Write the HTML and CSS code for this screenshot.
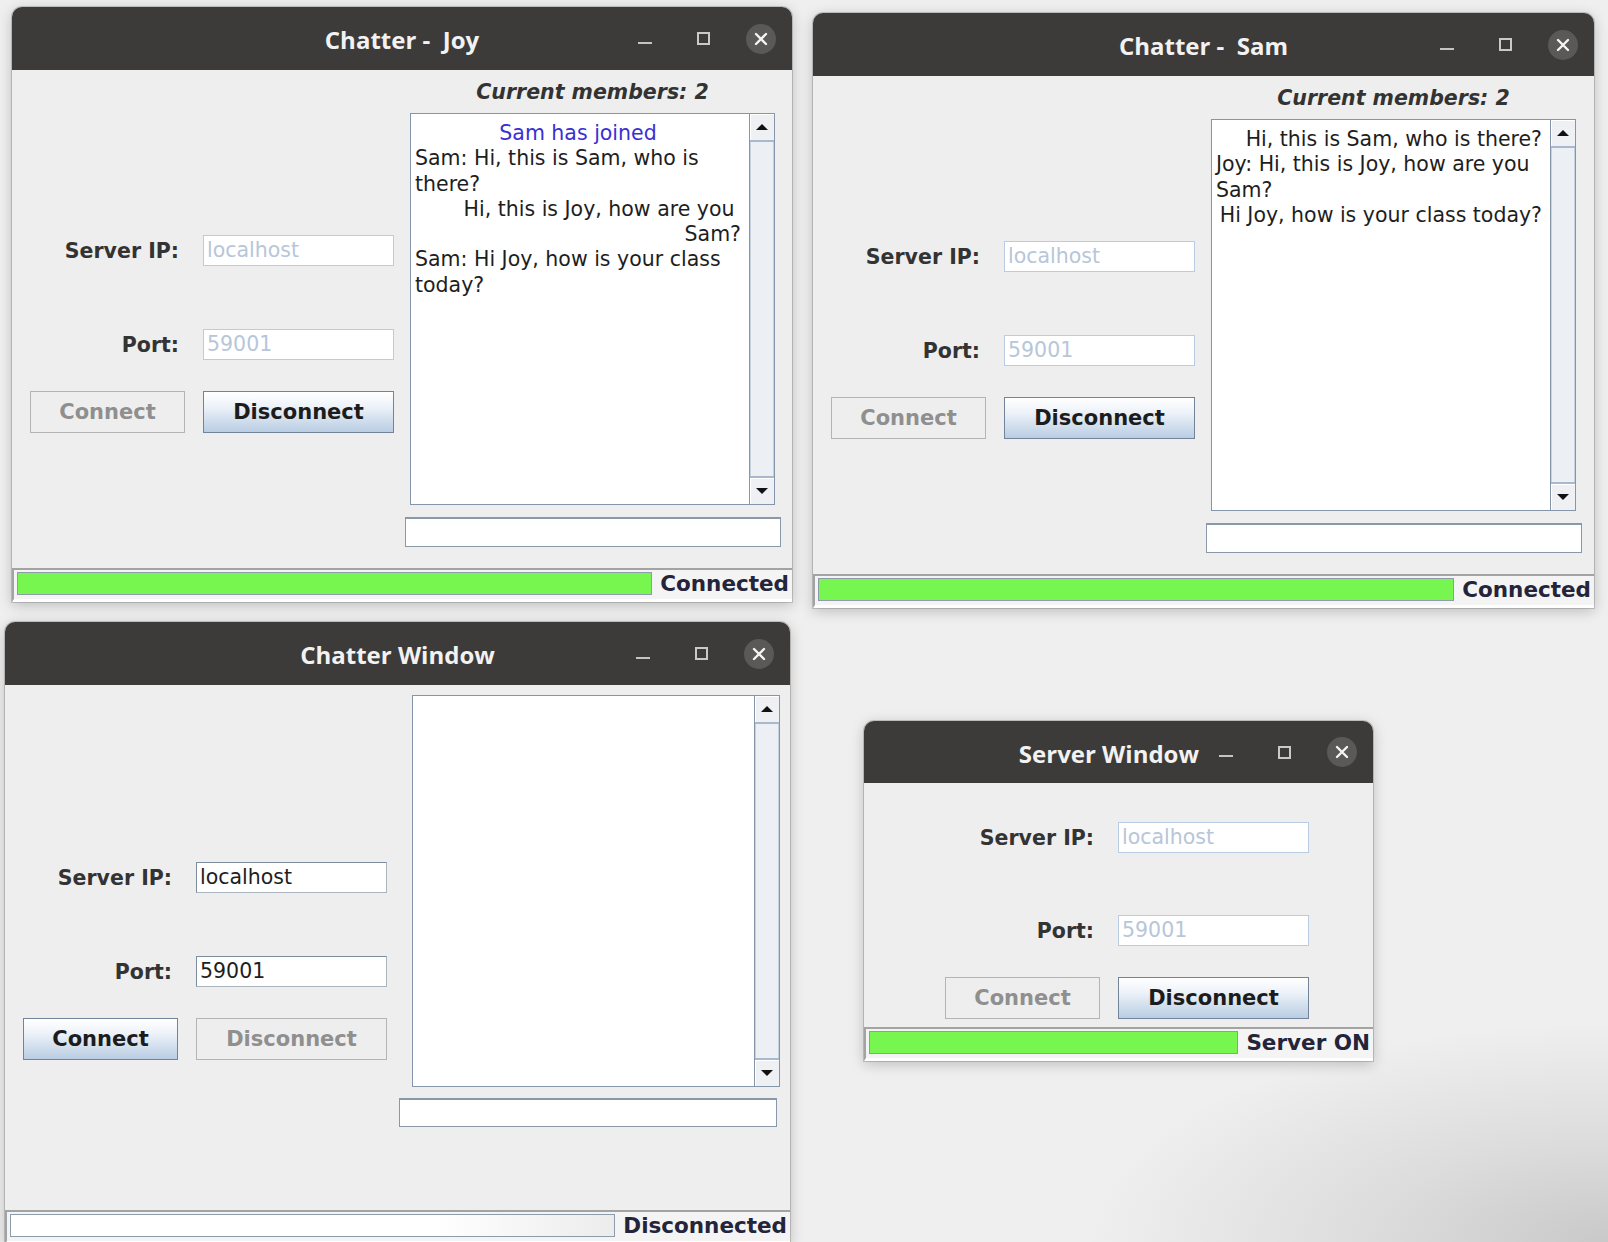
FILE: index.html
```html
<!DOCTYPE html>
<html lang="en">
<head>
<meta charset="utf-8">
<title>Chatter</title>
<link rel="stylesheet" href="styles.css">
</head>
<body>
<div class="desktop">

  <!-- Chatter - Joy -->
  <div class="win win-joy">
    <div class="titlebar">
      <span class="title">Chatter -&nbsp; Joy</span>
      <div class="controls">
        <span class="ctl ctl-min"><i class="min-line"></i></span>
        <span class="ctl ctl-max"><i class="max-box"></i></span>
        <span class="ctl ctl-close"><svg width="14" height="14" viewBox="0 0 14 14"><path d="M2 2 L12 12 M12 2 L2 12" stroke="#f4f4f4" stroke-width="2.4" stroke-linecap="round"/></svg></span>
      </div>
    </div>
    <div class="wbody">
      <div class="main">
        <div class="conn">
          <div class="row"><span class="lbl">Server IP:</span><span class="field disabled">localhost</span></div>
          <div class="row row-port"><span class="lbl">Port:</span><span class="field disabled">59001</span></div>
          <div class="row row-btns"><span class="btn btn-off">Connect</span><span class="btn btn-on">Disconnect</span></div>
        </div>
        <div class="chat">
          <div class="members">Current members: 2</div>
          <div class="scrollpane">
            <div class="text">
              <div class="c">Sam has joined</div>
              <div class="l">Sam: Hi, this is Sam, who is</div>
              <div class="l">there?</div>
              <div class="r">Hi, this is Joy, how are you&nbsp;</div>
              <div class="r">Sam?</div>
              <div class="l">Sam: Hi Joy, how is your class</div>
              <div class="l">today?</div>
            </div>
            <div class="vscroll">
              <div class="sb-btn sb-up"><i class="tri-up"></i></div>
              <div class="track"></div>
              <div class="sb-btn sb-down"><i class="tri-down"></i></div>
            </div>
          </div>
          <div class="input"></div>
        </div>
      </div>
      <div class="status">
        <div class="progress full"></div>
        <div class="status-lbl">Connected</div>
      </div>
    </div>
  </div>

  <!-- Chatter - Sam -->
  <div class="win win-sam">
    <div class="titlebar">
      <span class="title">Chatter -&nbsp; Sam</span>
      <div class="controls">
        <span class="ctl ctl-min"><i class="min-line"></i></span>
        <span class="ctl ctl-max"><i class="max-box"></i></span>
        <span class="ctl ctl-close"><svg width="14" height="14" viewBox="0 0 14 14"><path d="M2 2 L12 12 M12 2 L2 12" stroke="#f4f4f4" stroke-width="2.4" stroke-linecap="round"/></svg></span>
      </div>
    </div>
    <div class="wbody">
      <div class="main">
        <div class="conn">
          <div class="row"><span class="lbl">Server IP:</span><span class="field disabled">localhost</span></div>
          <div class="row row-port"><span class="lbl">Port:</span><span class="field disabled">59001</span></div>
          <div class="row row-btns"><span class="btn btn-off">Connect</span><span class="btn btn-on">Disconnect</span></div>
        </div>
        <div class="chat">
          <div class="members">Current members: 2</div>
          <div class="scrollpane">
            <div class="text">
              <div class="r">Hi, this is Sam, who is there?</div>
              <div class="l">Joy: Hi, this is Joy, how are you</div>
              <div class="l">Sam?</div>
              <div class="r">Hi Joy, how is your class today?</div>
            </div>
            <div class="vscroll">
              <div class="sb-btn sb-up"><i class="tri-up"></i></div>
              <div class="track"></div>
              <div class="sb-btn sb-down"><i class="tri-down"></i></div>
            </div>
          </div>
          <div class="input"></div>
        </div>
      </div>
      <div class="status">
        <div class="progress full"></div>
        <div class="status-lbl">Connected</div>
      </div>
    </div>
  </div>

  <!-- Chatter Window -->
  <div class="win win-new">
    <div class="titlebar">
      <span class="title">Chatter Window</span>
      <div class="controls">
        <span class="ctl ctl-min"><i class="min-line"></i></span>
        <span class="ctl ctl-max"><i class="max-box"></i></span>
        <span class="ctl ctl-close"><svg width="14" height="14" viewBox="0 0 14 14"><path d="M2 2 L12 12 M12 2 L2 12" stroke="#f4f4f4" stroke-width="2.4" stroke-linecap="round"/></svg></span>
      </div>
    </div>
    <div class="wbody">
      <div class="main">
        <div class="conn">
          <div class="row"><span class="lbl">Server IP:</span><span class="field enabled">localhost</span></div>
          <div class="row row-port"><span class="lbl">Port:</span><span class="field enabled">59001</span></div>
          <div class="row row-btns"><span class="btn btn-on">Connect</span><span class="btn btn-off">Disconnect</span></div>
        </div>
        <div class="chat">
          <div class="scrollpane">
            <div class="text"></div>
            <div class="vscroll">
              <div class="sb-btn sb-up"><i class="tri-up"></i></div>
              <div class="track"></div>
              <div class="sb-btn sb-down"><i class="tri-down"></i></div>
            </div>
          </div>
          <div class="input"></div>
        </div>
      </div>
      <div class="status">
        <div class="progress empty"></div>
        <div class="status-lbl">Disconnected</div>
      </div>
    </div>
  </div>

  <!-- Server Window -->
  <div class="win win-server">
    <div class="titlebar">
      <span class="title">Server Window</span>
      <div class="controls">
        <span class="ctl ctl-min"><i class="min-line"></i></span>
        <span class="ctl ctl-max"><i class="max-box"></i></span>
        <span class="ctl ctl-close"><svg width="14" height="14" viewBox="0 0 14 14"><path d="M2 2 L12 12 M12 2 L2 12" stroke="#f4f4f4" stroke-width="2.4" stroke-linecap="round"/></svg></span>
      </div>
    </div>
    <div class="wbody">
      <div class="main">
        <div class="conn">
          <div class="row"><span class="lbl">Server IP:</span><span class="field disabled">localhost</span></div>
          <div class="row row-port"><span class="lbl">Port:</span><span class="field disabled">59001</span></div>
          <div class="row row-btns"><span class="btn btn-off">Connect</span><span class="btn btn-on">Disconnect</span></div>
        </div>
      </div>
      <div class="status">
        <div class="progress full"></div>
        <div class="status-lbl">Server ON</div>
      </div>
    </div>
  </div>

</div>
</body>
</html>
```

FILE: styles.css
```css
* { box-sizing: border-box; }

html, body {
  margin: 0;
  padding: 0;
}

body {
  width: 1608px;
  height: 1242px;
  overflow: hidden;
  font-family: "DejaVu Sans", "Liberation Sans", sans-serif;
  background:
    radial-gradient(ellipse 520px 220px at 100% 100%, #c9c9c9 0%, #dcdcdc 45%, rgba(239,239,239,0) 100%),
    #efefef;
}

.desktop {
  position: relative;
  width: 1608px;
  height: 1242px;
}

/* ---------- windows ---------- */
.win {
  position: absolute;
  display: flex;
  flex-direction: column;
  background: #eeeeee;
  border-radius: 10px 10px 0 0;
  box-shadow: 0 0 0 1px rgba(0,0,0,0.16), 0 3px 14px rgba(0,0,0,0.22);
}

.win-joy    { left: 12px;  top: 7px;   width: 780px; height: 595px; }
.win-sam    { left: 813px; top: 13px;  width: 781px; height: 595px; }
.win-new    { left: 5px;   top: 622px; width: 785px; height: 622px; }
.win-server { left: 864px; top: 721px; width: 509px; height: 340px; }

.titlebar {
  flex: none;
  height: 63px;
  background: #3d3b39;
  border-radius: 10px 10px 0 0;
  display: grid;
  grid-template-columns: 1fr auto 1fr;
  align-items: center;
}
.win-server .titlebar { height: 62px; }

.title {
  grid-column: 2;
  font-family: "Open Sans", "DejaVu Sans", sans-serif;
  font-weight: 700;
  font-size: 24px;
  color: #f2f2f2;
  white-space: nowrap;
  padding-top: 2px;
}
.win-server .title { margin-right: 12px; }

.controls {
  grid-column: 3;
  justify-self: end;
  display: flex;
  align-items: center;
  gap: 28px;
  padding-right: 16px;
}

.ctl {
  width: 30px;
  height: 30px;
  display: flex;
  align-items: center;
  justify-content: center;
}

.min-line {
  display: block;
  width: 14px;
  height: 2px;
  background: #c4c4c4;
  margin-top: 8px;
}

.max-box {
  display: block;
  width: 13px;
  height: 13px;
  border: 2px solid #c9c9c9;
}

.ctl-close {
  border-radius: 50%;
  background: #5b5957;
}

/* ---------- body ---------- */
.wbody {
  flex: 1;
  display: flex;
  flex-direction: column;
  min-height: 0;
}

.main {
  flex: 1;
  display: flex;
  min-height: 0;
}

.conn {
  flex: none;
  width: 382px;
  padding-left: 18px;
  padding-top: 165px;
  display: flex;
  flex-direction: column;
}
.win-new .conn { padding-top: 177px; }
.win-server .conn { width: auto; padding-left: 81px; padding-top: 39px; }

.row {
  display: grid;
  grid-template-columns: 155px 191px;
  column-gap: 18px;
  align-items: center;
  height: 31px;
}

.row-port { margin-top: 63px; }
.win-server .row-port { margin-top: 62px; }
.row-btns { margin-top: 31px; height: 42px; }

.lbl {
  text-align: right;
  padding-right: 6px;
  font-weight: 700;
  font-size: 20.5px;
  color: #333333;
}

.field {
  height: 31px;
  background: #ffffff;
  font-size: 20.5px;
  line-height: 29px;
  padding-left: 3px;
  white-space: nowrap;
  overflow: hidden;
}
.field.disabled {
  border: 1px solid #b8cde3;
  color: #b7c6d9;
}
.field.enabled {
  border: 1px solid #7d8d9d;
  border-right-color: #aab5c0;
  border-bottom-color: #aab5c0;
  color: #1e1e1e;
}

.btn {
  height: 42px;
  display: flex;
  align-items: center;
  justify-content: center;
  font-weight: 700;
  font-size: 21px;
}
.btn-on {
  background: linear-gradient(#ffffff 0%, #eef3f9 35%, #b9cde3 100%);
  border: 1px solid #73839a;
  color: #1c1c1c;
}
.btn-off {
  background: #eeeeee;
  border: 1px solid #b4b4b4;
  color: #8f8f8f;
}

/* ---------- chat column ---------- */
.chat {
  flex: none;
  width: 376px;
  margin-left: 11px;
  padding-top: 10px;
  display: flex;
  flex-direction: column;
}
.win-new .chat { width: 378px; margin-left: 12px; }

.members {
  height: 25px;
  line-height: 25px;
  margin: 0 6px 8px 5px;
  text-align: center;
  font-weight: 700;
  font-style: italic;
  font-size: 20.5px;
  color: #333333;
}

.scrollpane {
  flex: none;
  display: flex;
  height: 392px;
  width: 365px;
  margin-left: 5px;
  border: 1px solid #8596ab;
  background: #ffffff;
}
.win-new .scrollpane { width: 368px; margin-left: 13px; }

.text {
  flex: 1;
  min-width: 0;
  padding: 7px 8px 0 4px;
  font-size: 20.5px;
  line-height: 25.3px;
  color: #1e1e1e;
  white-space: nowrap;
}
.text .l { text-align: left; }
.text .r { text-align: right; }
.text .c { text-align: center; color: #3a2fd4; }

.vscroll {
  flex: none;
  width: 25px;
  display: flex;
  flex-direction: column;
  border-left: 1px solid #8596ab;
  background: #eceef2;
}

.sb-btn {
  flex: none;
  height: 28px;
  display: flex;
  align-items: center;
  justify-content: center;
  background: #eef0f3;
  box-shadow: inset 1px 1px 0 #ffffff;
}
.sb-up { border-bottom: 2px solid #a9b9cd; }
.sb-down { border-top: 2px solid #a9b9cd; }

.track {
  flex: 1;
  background: #eceff3;
  box-shadow: inset 1px 0 0 #c6d1de, inset -1px 0 0 #c6d1de;
}

.tri-up, .tri-down {
  display: block;
  width: 0;
  height: 0;
  border-left: 6px solid transparent;
  border-right: 6px solid transparent;
}
.tri-up { border-bottom: 6px solid #111111; }
.tri-down { border-top: 6px solid #111111; }

.input {
  flex: none;
  margin-top: 12px;
  height: 30px;
  background: #ffffff;
  border: 1px solid #8a99aa;
  border-top-width: 2px;
}
.win-new .input { margin-top: 11px; height: 29px; }

/* ---------- status bar ---------- */
.status {
  flex: none;
  height: 34px;
  display: flex;
  border-top: 2px solid #a3a3a3;
  border-left: 2px solid #a3a3a3;
  border-bottom: 3px solid #ffffff;
  padding: 2px 0 4px 3px;
  background: #f4f4f4;
}

.progress {
  flex: 1;
  border: 1px solid #8e9bab;
}
.progress.full { background: #76f64f; }
.progress.empty { background: linear-gradient(90deg, #ffffff 0%, #ffffff 70%, #ececec 100%); }

.status-lbl {
  flex: none;
  padding: 0 3px 0 8px;
  font-weight: 700;
  font-size: 21.5px;
  line-height: 23px;
  color: #24243a;
  white-space: nowrap;
}
```
